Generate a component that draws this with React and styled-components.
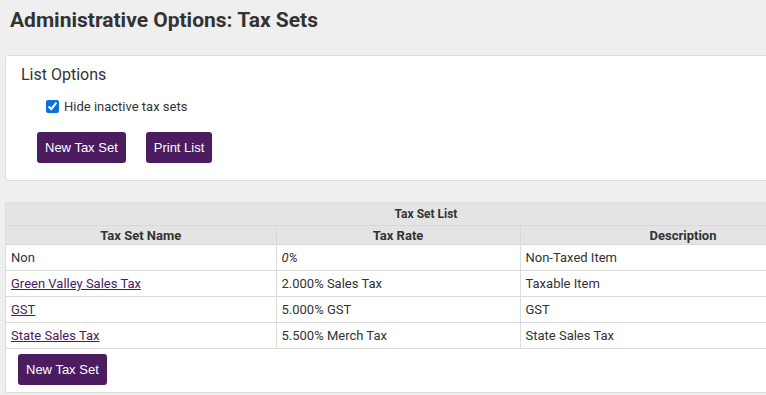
import React from 'react';
import styled, { createGlobalStyle } from 'styled-components';

const GlobalStyle = createGlobalStyle`
  html, body {
    margin: 0;
    padding: 0;
    background: #efefef;
    overflow: hidden;
  }
  body {
    font-family: Roboto, "Liberation Sans", sans-serif;
    color: #333;
  }
`;

const purple = '#4b1c60';

const rows = [
  { name: 'Non', rate: '0%', desc: 'Non-Taxed Item', link: false, italic: true },
  { name: 'Green Valley Sales Tax', rate: '2.000% Sales Tax', desc: 'Taxable Item', link: true },
  { name: 'GST', rate: '5.000% GST', desc: 'GST', link: true },
  { name: 'State Sales Tax', rate: '5.500% Merch Tax', desc: 'State Sales Tax', link: true },
];

const App = () => {
  return (
    <Page>
      <GlobalStyle />
      <Title>Administrative Options: Tax Sets</Title>
      <Panel>
        <PanelTitle>List Options</PanelTitle>
        <CheckRow>
          <Check type="checkbox" defaultChecked />
          <span>Hide inactive tax sets</span>
        </CheckRow>
        <ButtonRow>
          <Button>New Tax Set</Button>
          <Button>Print List</Button>
        </ButtonRow>
      </Panel>
      <TablePanel>
        <Table>
          <colgroup>
            <col style={{ width: 270 }} />
            <col style={{ width: 244 }} />
            <col style={{ width: 326 }} />
          </colgroup>
          <thead>
            <tr>
              <Caption colSpan={3}>Tax Set List</Caption>
            </tr>
            <tr>
              <Th>Tax Set Name</Th>
              <Th>Tax Rate</Th>
              <Th>Description</Th>
            </tr>
          </thead>
          <tbody>
            {rows.map((r) => (
              <tr key={r.name}>
                <Td>{r.link ? <NameLink href="#">{r.name}</NameLink> : r.name}</Td>
                <Td $italic={r.italic}>{r.rate}</Td>
                <Td>{r.desc}</Td>
              </tr>
            ))}
          </tbody>
        </Table>
        <Footer>
          <Button>New Tax Set</Button>
        </Footer>
      </TablePanel>
    </Page>
  );
};

const Page = styled.div`
  width: 842px;
  padding: 0 0 0 5px;
`;

const Title = styled.h1`
  margin: 0;
  padding: 8px 0 0 5px;
  height: 55px;
  box-sizing: border-box;
  font-size: 21px;
  line-height: 25px;
  font-weight: 700;
  color: #333;
`;

const Panel = styled.div`
  background: #fff;
  border: 1px solid #dcdcdc;
  border-radius: 3px;
  height: 126px;
  box-sizing: border-box;
  padding: 9px 15px 0;
`;

const PanelTitle = styled.div`
  font-size: 16px;
  line-height: 19px;
  color: #333;
`;

const CheckRow = styled.label`
  display: flex;
  align-items: center;
  gap: 5px;
  margin: 15px 0 0 25px;
  font-size: 13px;
  color: #333;
`;

const Check = styled.input`
  width: 13px;
  height: 13px;
  margin: 0;
  accent-color: #0b6fe0;
`;

const ButtonRow = styled.div`
  display: flex;
  gap: 20px;
  margin: 18px 0 0 16px;
`;

const Button = styled.button`
  height: 31px;
  padding: 0 8px;
  background: ${purple};
  color: #fff;
  border: none;
  border-radius: 3px;
  font-family: "Liberation Sans", Arial, sans-serif;
  font-size: 13px;
  cursor: pointer;
`;

const TablePanel = styled.div`
  margin-top: 21px;
  background: #fff;
  border: 1px solid #dcdcdc;
  border-radius: 2px;
  height: 191px;
  box-sizing: border-box;
`;

const Table = styled.table`
  width: 840px;
  border-collapse: collapse;
  table-layout: fixed;
  font-size: 13px;
`;

const Caption = styled.th`
  background: #e4e4e4;
  height: 22px;
  padding: 0;
  font-size: 12px;
  font-weight: 700;
  color: #333;
  border-bottom: 1px solid #d8d8d8;
`;

const Th = styled.th`
  background: #e4e4e4;
  height: 18px;
  padding: 0;
  font-weight: 700;
  color: #333;
  border: 1px solid #d8d8d8;
  border-top: none;
  &:first-child { border-left: none; }
`;

const Td = styled.td`
  height: 25px;
  padding: 0 5px;
  color: #333;
  font-style: ${(p) => (p.$italic ? 'italic' : 'normal')};
  border: 1px solid #dcdcdc;
  &:first-child { border-left: none; }
`;

const NameLink = styled.a`
  color: ${purple};
  text-decoration: underline;
`;

const Footer = styled.div`
  padding: 5px 0 0 12px;
`;

export default App;
